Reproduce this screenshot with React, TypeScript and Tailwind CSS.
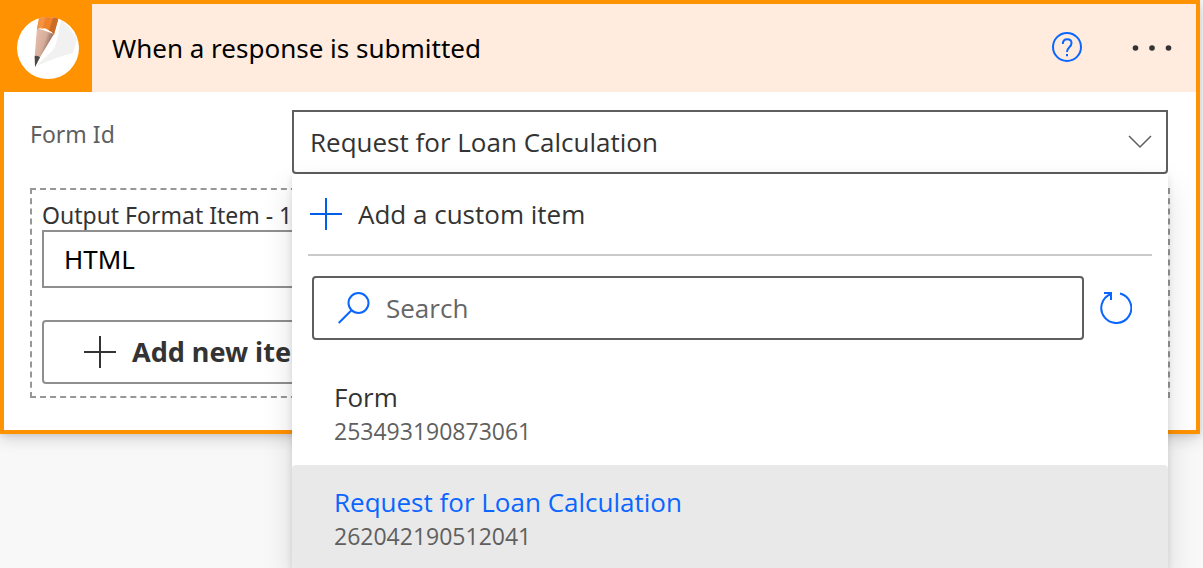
import { useState } from "react"

const forms = [
  { id: "253493190873061", name: "Form" },
  { id: "262042190512041", name: "Request for Loan Calculation" },
]

function PencilLogo() {
  return (
    <svg viewBox="0 0 62 62" className="size-[62px]" aria-hidden="true">
      <defs>
        <clipPath id="logo-disc">
          <circle cx="31" cy="31" r="31" />
        </clipPath>
        <linearGradient id="logo-wood" gradientUnits="userSpaceOnUse" x1="19" y1="22" x2="34" y2="27">
          <stop offset="0" stopColor="#e3bba8" />
          <stop offset="0.55" stopColor="#d6ad9b" />
          <stop offset="0.75" stopColor="#b48a7b" />
          <stop offset="1" stopColor="#98705f" />
        </linearGradient>
      </defs>
      <g clipPath="url(#logo-disc)">
        <rect width="62" height="62" fill="#fff" />
        {/* Paper fold */}
        <path d="M44 3 Q42 14 39.500 25 Q38 32 33 36 L18 50 Q36 41 56 36 L60 22 Q52 9 44 3Z" fill="#f1f1f1" />
        {/* Pencil */}
        <path d="M20 11L37 17L23 40.300L18 50L17.700 39Z" fill="url(#logo-wood)" />
        <path d="M22.700 -2H42L41 3L37 17.500Q34.500 14 32 13.500Q28 10.500 25.500 11.500Q23 10.500 20 12Z" fill="#f08228" />
        <path d="M22.700 -2H29L25.500 11.500Q23 10.500 20 12Z" fill="#f39344" />
        <path d="M37 -2H42L41 3L37 17.500Q34.500 14 32 13.500Z" fill="#c96d27" />
        <path d="M17.700 39Q20.500 38 23 40.300L18 50Z" fill="#48484a" />
      </g>
    </svg>
  )
}

function PlusIcon() {
  return (
    <svg viewBox="0 0 32 32" className="size-8 shrink-0" fill="none" stroke="currentColor" strokeWidth="2" aria-hidden="true">
      <path d="M16 0V32M0 16H32" />
    </svg>
  )
}

export default function App() {
  const [formId, setFormId] = useState(forms[1].id)
  const [format, setFormat] = useState("HTML")
  const [query, setQuery] = useState("")

  const visibleForms = forms.filter((form) => form.name.toLowerCase().includes(query.toLowerCase()))

  return (
    <main className="h-screen overflow-hidden bg-[#f8f8f8] pr-[3px] font-['Noto_Sans',sans-serif] text-[#333]">
      <section className="border-4 border-[#ff9200] bg-white shadow-[0_6px_14px_rgba(0,0,0,0.13),0_1px_6px_rgba(0,0,0,0.11)]">
        {/* Card header */}
        <header className="flex h-[88px] items-center bg-[#ffecdf]">
          <div className="flex h-full w-[88px] items-center justify-center bg-[#ff9200]">
            <PencilLogo />
          </div>
          <h1 className="flex-1 pl-5 text-[26px] text-black">When a response is submitted</h1>
          <button type="button" aria-label="Help" className="mr-12 text-[#0a66ff]">
            <svg viewBox="0 0 32 32" className="size-8" fill="none" stroke="currentColor" strokeWidth="2">
              <circle cx="15" cy="15" r="14" />
              <path d="M10.800 12Q10.800 7.200 15.300 7.200Q19.500 7.200 19.500 11Q19.500 13.200 17.300 15.300Q15 17.500 15 20" />
              <path d="M15 22V24.200" />
            </svg>
          </button>
          <button type="button" aria-label="More options" className="mr-6 text-[#333]">
            <svg viewBox="0 0 40 32" className="h-8 w-10" fill="currentColor">
              <circle cx="3.500" cy="16" r="2.800" />
              <circle cx="20" cy="16" r="2.800" />
              <circle cx="36.500" cy="16" r="2.800" />
            </svg>
          </button>
        </header>

        <div className="px-[26px] pt-[18px] pb-8">
          {/* Form picker */}
          <div className="flex pr-0.5">
            <label htmlFor="form-id" className="w-[262px] shrink-0 pt-2 text-[23px] leading-8 text-[#5f5f5f]">
              Form Id
            </label>
            <div className="relative flex-1">
              <select
                id="form-id"
                value={formId}
                onChange={(e) => setFormId(e.target.value)}
                className="block h-16 w-full appearance-none rounded-b border-2 border-[#5f5f5f] bg-white px-4 font-['Open_Sans',sans-serif] text-[26px] outline-none"
              >
                {forms.map((form) => (
                  <option key={form.id} value={form.id}>
                    {form.name}
                  </option>
                ))}
              </select>
              <svg
                viewBox="0 0 24 14"
                className="pointer-events-none absolute top-[25px] right-4 h-[14px] w-6"
                fill="none"
                stroke="#5f5f5f"
                strokeWidth="1.500"
                aria-hidden="true"
              >
                <path d="M1 1L12 12L23 1" />
              </svg>

              <div className="absolute inset-x-0 top-full z-10 bg-white font-['Open_Sans',sans-serif] shadow-[0_13px_29px_rgba(0,0,0,0.13),0_2px_7px_rgba(0,0,0,0.11)]">
                <div className="mx-4 border-b-2 border-[#cacaca]">
                  <button type="button" className="flex h-20 w-full items-center gap-4 px-0.5 text-[26px]">
                    <span className="text-[#005fe8]">
                      <PlusIcon />
                    </span>
                    Add a custom item
                  </button>
                </div>

                <div className="flex items-center gap-4 pt-5 pr-9 pl-5">
                  <label className="flex h-16 flex-1 items-center gap-4 rounded border-2 border-[#5f5f5f] pl-6">
                    <svg viewBox="0 0 32 32" className="size-8 shrink-0" fill="none" stroke="#0a66ff" strokeWidth="2" aria-hidden="true">
                      <circle cx="20.500" cy="11" r="10" />
                      <path d="M13.500 18.200L0.700 31" />
                    </svg>
                    <input
                      type="text"
                      aria-label="Search"
                      placeholder="Search"
                      value={query}
                      onChange={(e) => setQuery(e.target.value)}
                      className="w-full text-[26px] outline-none placeholder:text-[#666]"
                    />
                  </label>
                  <button type="button" aria-label="Refresh">
                    <svg viewBox="0 0 32 32" className="size-8" fill="none" stroke="#0a66ff" strokeWidth="2">
                      <path d="M20 1.500A15 15 0 1 1 11 2" />
                      <path d="M4 1H11V8" />
                    </svg>
                  </button>
                </div>

                <ul className="pt-5">
                  {visibleForms.map((form) => (
                    <li key={form.id}>
                      <button
                        type="button"
                        onClick={() => setFormId(form.id)}
                        className={`block h-[105px] w-full rounded pr-4 pl-[42px] text-left ${form.id === formId ? "bg-[#e9e9e9]" : ""}`}
                      >
                        <span className={`block text-[26px] leading-9 ${form.id === formId ? "text-[#0a66ff]" : ""}`}>
                          {form.name}
                        </span>
                        <span className="block text-[23px] leading-8 text-[#5f5f5f]">{form.id}</span>
                      </button>
                    </li>
                  ))}
                </ul>
              </div>
            </div>
          </div>

          {/* Output formats */}
          <div className="mt-[14px] border-2 border-dashed border-[#979797] p-[10px] pb-3">
            <label htmlFor="output-format" className="block text-[23px] leading-[30px]">
              Output Format Item - 1
            </label>
            <input
              id="output-format"
              type="text"
              value={format}
              onChange={(e) => setFormat(e.target.value)}
              className="block h-[58px] w-full border-2 border-[#8f8f8f] px-5 text-[26px] text-black"
            />
            <button
              type="button"
              className="mt-8 flex h-16 items-center gap-4 rounded border-2 border-[#8f8f8f] px-10 text-[27px] font-bold"
            >
              <PlusIcon />
              Add new item
            </button>
          </div>
        </div>
      </section>
    </main>
  )
}
